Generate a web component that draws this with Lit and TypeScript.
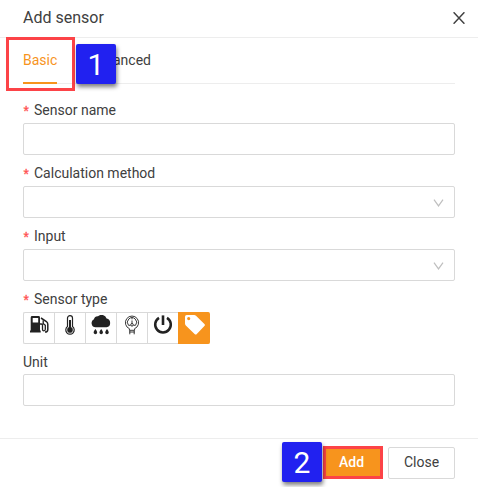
import { LitElement, html, css, svg, nothing } from "lit";
import { customElement, property } from "lit/decorators.js";

const icons = [
  svg`<path fill-rule="evenodd" d="M1.700 2.400Q1.700 1 3.100 1H9.600Q11 1 11 2.400V15.500H11.700V17.500H1V15.500H1.700ZM3.700 2.900V7.500H9.200V2.900Z"/>
    <path d="M11 9H12.300Q13.500 9 13.500 10.300V14.200Q13.500 15.800 14.900 15.800Q16.300 15.800 16.300 14.300V10.200L14.200 8.600V5.200" fill="none" stroke="currentColor" stroke-width="1.300"/>
    <path d="M12 3L17.400 6.500Q18.800 7.600 18.800 9.200V14.400Q18.800 17.100 16 17.100" fill="none" stroke="currentColor" stroke-width="1.500"/>`,
  svg`<path d="M7.500 11.600V3.100A2.500 2.500 0 0 1 12.500 3.100V11.600A4.200 4.200 0 1 1 7.500 11.600Z" fill="none" stroke="currentColor" stroke-width="1.200"/>
    <circle cx="10" cy="14.900" r="2.800"/><path d="M9 5H11V14H9Z"/>`,
  svg`<path d="M4.600 12.300A4.300 4.300 0 0 1 2.900 4.200A4 4 0 0 1 7 1.300A5.300 5.300 0 0 1 15.600 3.500A4.500 4.500 0 0 1 15.600 12.300Z"/>
    <path d="M4.400 14Q7 17.200 5.800 18.500Q4.400 19.800 3 18.500Q1.800 17.200 4.400 14ZM10.200 14Q12.800 17.200 11.600 18.500Q10.200 19.800 8.800 18.500Q7.600 17.200 10.200 14ZM16 14Q18.600 17.200 17.400 18.500Q16 19.800 14.600 18.500Q13.400 17.200 16 14Z"/>`,
  svg`<g fill="none" stroke="currentColor" stroke-width=".9"><path d="M7.400 13.700A6.600 6.600 0 1 1 12.600 13.700V15.300H7.400Z"/>
    <path d="M6.500 10.300A4.600 4.600 0 1 1 13.500 10.300M6.500 10.300H8.500M11.500 10.300H13.500M10 2.900V4.300"/>
    <circle cx="10" cy="9.800" r="1.300"/><path d="M10 8.500V5.500M7.800 15.500V19.300M12.200 15.500V19.300M7.400 17H12.600"/></g>`,
  svg`<path d="M6 2.900A7.800 7.800 0 1 0 14 2.900" fill="none" stroke="currentColor" stroke-width="2.500"/><path d="M8.700 .4H11.300V10H8.700Z"/>`,
  svg`<path fill-rule="evenodd" d="M0 1.700Q0 0 1.700 0H9.200Q10.200 0 11 .7L19.400 9Q20.400 10 19.400 11L11.800 18.900Q10.700 20 9.600 18.900L.8 10.400Q0 9.600 0 8.500ZM3.700 2A1.600 1.600 0 1 0 3.700 5.200A1.600 1.600 0 0 0 3.700 2Z"/>`,
];

@customElement("form-field")
class FormField extends LitElement {
  @property() label = "";
  @property({ type: Boolean }) required = false;
  @property() kind = "text";

  static styles = css`
    :host { display: block; }
    .label { height: 22px; line-height: 22px; display: flex; margin-bottom: 2px; }
    .star { color: #ff4d4f; font: 14px/28px "Liberation Mono", monospace; width: 7px; margin-right: 4px; margin-left: -1px; padding-right: 1px; -webkit-text-stroke: .3px #ff4d4f; }
    .box { height: 32px; box-sizing: border-box; border: 1px solid #d9d9d9; border-radius: 2px; display: flex; align-items: center; justify-content: flex-end; padding: 1px 10px 0 0; }
    .types { display: flex; height: 32px; }
    .type { width: 31px; box-sizing: border-box; border: 1px solid #d9d9d9; border-right: 0; display: flex; justify-content: center; padding-top: 2px; color: #222; }
    .type:first-child { border-radius: 2px 0 0 2px; }
    .type:last-child { width: 32px; background: #f7941d; border-color: #f7941d; color: #fff; border-radius: 0 2px 2px 0; }
    svg { flex: none; }
  `;

  control() {
    if (this.kind === "types")
      return html`<div class="types">${icons.map((i) => html`<div class="type"><svg width="20" height="20" viewBox="0 0 20 20" fill="currentColor">${i}</svg></div>`)}</div>`;
    return html`<div class="box">${this.kind === "select"
      ? html`<svg width="11" height="8" viewBox="0 0 11 8" fill="none" stroke="#bfbfbf" stroke-width="1.200"><path d="M1 .6L5.500 6.900L10 .6"/></svg>`
      : nothing}</div>`;
  }

  render() {
    return html`<div class="label">${this.required ? html`<span class="star">*</span>` : nothing}<span>${this.label}</span></div>${this.control()}`;
  }
}

@customElement("app-root")
class AppRoot extends LitElement {
  static styles = css`
    :host { display: flex; flex-direction: column; position: relative; height: 487px; background: #fff; color: #404040; font: 14px/22px Roboto, sans-serif; overflow: hidden; }
    .header { height: 38px; box-sizing: border-box; border-bottom: 1px solid #ededed; display: flex; align-items: center; justify-content: space-between; padding: 0 13px 2px 23px; font-size: 16px; }
    .tabs { height: 46px; box-sizing: border-box; border-bottom: 1px solid #ededed; margin: 0 23px; display: flex; gap: 32px; }
    .tab { padding-top: 11px; height: 46px; box-sizing: border-box; }
    .active { color: #f7941d; border-bottom: 2px solid #f7941d; }
    .form { padding: 15px 23px 0; height: 354px; box-sizing: border-box; display: flex; flex-direction: column; gap: 7px; }
    .unit { display: grid; gap: 1px; line-height: 22px; }
    .unit-box { height: 32px; box-sizing: border-box; border: 1px solid #d9d9d9; border-radius: 2px; }
    .footer { border-top: 1px solid #ededed; display: flex; justify-content: flex-end; gap: 5px; padding: 8px 23px 0; }
    .button { box-sizing: border-box; height: 32px; line-height: 29px; border: 1px solid #d9d9d9; border-radius: 2px; width: 67px; text-align: center; }
    .primary { width: 60px; height: 33px; margin-top: -1px; line-height: 27px; border: 3px solid #fc4347; border-radius: 0; background: #f7941d; color: #fff; padding-right: 3px; font-weight: 500; }
    .mark { position: absolute; left: 6px; top: 37px; width: 69px; height: 54px; box-sizing: border-box; border: 3px solid #fc4347; }
    .badge { position: absolute; width: 40px; height: 40px; border-radius: 2px; background: #2121f0; color: #fff; font: 30px/41px Roboto, sans-serif; text-align: center; box-shadow: 1px 3px 4px rgba(0, 0, 0, .5); }
    .one { left: 76px; top: 44px; }
    .two { left: 282px; top: 442px; }
  `;

  render() {
    return html`
      <div class="header"><span>Add sensor</span>
        <svg width="12" height="12" viewBox="0 0 12 12" fill="none" stroke="#404040" stroke-width="1.500"><path d="M.6 .3L11.400 11.700M11.400 .3L.6 11.700"/></svg>
      </div>
      <div class="tabs"><div class="tab active">Basic</div><div class="tab">Advanced</div></div>
      <div class="form">
        <form-field label="Sensor name" required></form-field>
        <form-field label="Calculation method" required kind="select"></form-field>
        <form-field label="Input" required kind="select"></form-field>
        <form-field label="Sensor type" required kind="types"></form-field>
        <div class="unit"><span>Unit</span><div class="unit-box"></div></div>
      </div>
      <div class="footer"><div class="button primary">Add</div><div class="button">Close</div></div>
      <div class="mark"></div>
      <div class="badge one">1</div>
      <div class="badge two">2</div>
    `;
  }
}
